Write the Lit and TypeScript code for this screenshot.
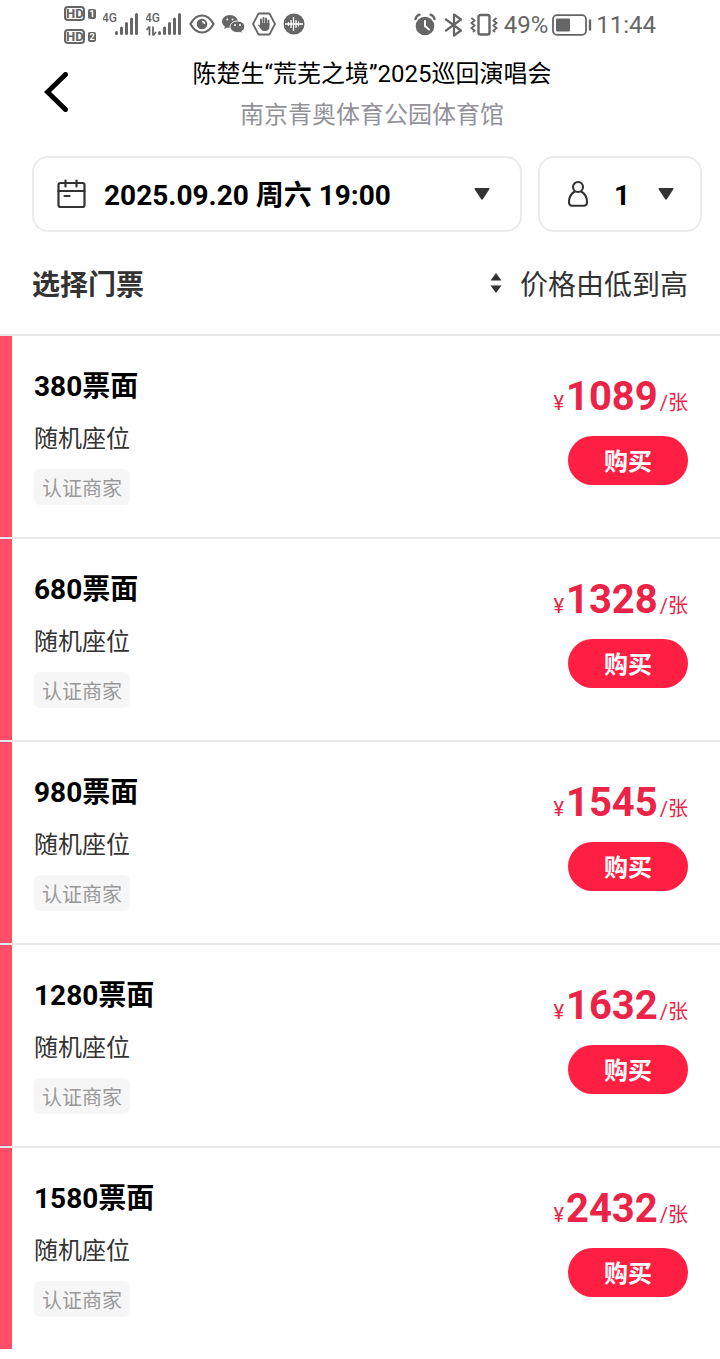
import { LitElement, html, css, svg } from "lit";
import { customElement, property, state } from "lit/decorators.js";

interface Ticket {
  face: number;
  price: number;
}

const TICKETS: Ticket[] = [
  { face: 380, price: 1089 },
  { face: 680, price: 1328 },
  { face: 980, price: 1545 },
  { face: 1280, price: 1632 },
  { face: 1580, price: 2432 },
];

@customElement("status-bar")
class StatusBar extends LitElement {
  static styles = css`
    :host {
      display: flex;
      justify-content: space-between;
      align-items: center;
      box-sizing: border-box;
      height: 48px;
      padding: 0 64px;
      color: #666;
      font-size: 24px;
      line-height: 28px;
    }
    .group {
      display: flex;
      align-items: center;
    }
    .left {
      gap: 7px;
    }
    .right {
      gap: 4px;
      padding-top: 2px;
    }
    svg {
      display: block;
      flex: none;
    }
    .hd {
      display: grid;
      gap: 8px;
      padding-top: 2px;
    }
    .hd-row {
      display: flex;
      align-items: center;
      gap: 3px;
    }
    .hd-tag {
      box-sizing: border-box;
      width: 21px;
      height: 15px;
      border: 2px solid #666;
      border-radius: 4px;
      font-size: 13px;
      font-weight: 800;
      line-height: 12px;
      text-align: center;
    }
    .hd-num {
      width: 8px;
      height: 10px;
      border-radius: 2px;
      background: #666;
      color: #fff;
      font-size: 9px;
      font-weight: 700;
      line-height: 10px;
      text-align: center;
    }
    .net {
      font: 500 12px "Roboto", sans-serif;
    }
  `;

  private bars(x: number) {
    return [0, 1, 2, 3, 4].map(
      (i) => svg`<rect x=${x + i * 5} y=${25 - i * 4.5} width="3" height=${4 + i * 4.5} rx="1.5" />`
    );
  }

  render() {
    return html`
      <div class="group left">
        <div class="hd">
          <div class="hd-row"><span class="hd-tag">HD</span><span class="hd-num">1</span></div>
          <div class="hd-row"><span class="hd-tag">HD</span><span class="hd-num">2</span></div>
        </div>
        <svg width="36" height="36" viewBox="0 0 36 36" fill="#666">
          <text class="net" x="-1" y="16">4G</text>
          ${this.bars(12)}
        </svg>
        <svg width="36" height="36" viewBox="0 0 36 36" fill="#666">
          <text class="net" x="-1" y="16">4G</text>
          <path d="M3.500 20.500v9M3.500 20.500l-3 3.500M7 29.500v-9M7 29.500l3-3.500" fill="none" stroke="#666" stroke-width="1.800" />
          ${this.bars(12)}
        </svg>
        <svg width="26" height="20" viewBox="0 0 26 20">
          <path d="M1.500 10Q6 1.500 13 1.500T24.500 10Q20 18.500 13 18.500T1.500 10Z" fill="none" stroke="#666" stroke-width="2.200" />
          <circle cx="13" cy="10" r="5.300" fill="#666" />
          <path d="M13 7.500a2.500 2.500 0 0 1 2.500 2.500" fill="none" stroke="#fff" stroke-width="1.400" />
        </svg>
        <svg width="23" height="20" viewBox="0 0 23 20">
          <path d="M8 1C3.600 1 0 3.900 0 7.500c0 2 1.100 3.800 2.900 5L2.200 15l2.900-1.500c.9.300 1.900.4 2.900.4 4.400 0 8-2.900 8-6.400S12.400 1 8 1Z" fill="#666" />
          <path d="M15.500 7C11.400 7 8 9.600 8 12.800s3.400 5.800 7.500 5.800c.8 0 1.600-.1 2.300-.3l2.600 1.300-.6-2.200c1.800-1.100 3-2.700 3-4.600C22.800 9.600 19.600 7 15.500 7Z" fill="#666" stroke="#fff" />
          <g fill="#fff"><circle cx="5.300" cy="5.500" r="1" /><circle cx="10.500" cy="5.500" r="1" /><circle cx="13" cy="11" r="1" /><circle cx="18" cy="11" r="1" /></g>
        </svg>
        <svg width="24" height="24" viewBox="0 0 24 24">
          <path d="M6.500 1.500h11L23 12l-5.500 10.500h-11L1 12Z" fill="none" stroke="#666" stroke-width="1.800" stroke-linejoin="round" />
          <path d="M9 13V7.500M11.500 12V6M14 12V6.500M16.400 13V8.500" stroke="#666" stroke-width="1.900" stroke-linecap="round" />
          <path d="M8 11h9.400v4c0 2.500-1.500 4-4.400 4-2.300 0-3.300-1-4.500-2.600L6 13.200c.3-1 1.200-.8 2 .2Z" fill="#666" />
        </svg>
        <svg width="22" height="22" viewBox="0 0 22 22">
          <circle cx="11" cy="11" r="10.500" fill="#666" />
          <path d="M2 11h18M5.500 9v4M8 7v8M10.500 4v14M13 7v8M15.500 8.500v5M18 10v2" stroke="#fff" stroke-width="1.300" />
        </svg>
      </div>
      <div class="group right">
        <svg width="26" height="24" viewBox="0 0 26 24">
          <circle cx="11" cy="13" r="9.300" fill="#666" />
          <path d="M1.500 6Q2.300 2.800 5.500 1.700M20.500 6Q19.700 2.800 16.500 1.700" fill="none" stroke="#666" stroke-width="2.400" stroke-linecap="round" />
          <path d="M11 8v5l4 3.500" fill="none" stroke="#fff" stroke-width="2" stroke-linecap="round" />
        </svg>
        <svg width="22" height="24" viewBox="0 0 22 24">
          <path d="M2 6.500 17 17.500 10 22.500V1.500L17 6.500 2 17.500" fill="none" stroke="#666" stroke-width="2.200" stroke-linejoin="round" stroke-linecap="round" />
        </svg>
        <svg width="30" height="24" viewBox="0 0 30 24" fill="none" stroke="#666">
          <rect x="8.500" y="2" width="11" height="19.500" rx="2" stroke-width="2.400" />
          <path d="M1.500 5l3 2.500-3 2.500 3 2.500-3 2.500 3 2.500-1.500 1.500M26.500 5l-3 2.500 3 2.500-3 2.500 3 2.500-3 2.500 1.500 1.500" stroke-width="1.900" />
        </svg>
        <span>49%</span>
        <svg width="40" height="22" viewBox="0 0 40 22">
          <rect x="1" y="1.200" width="33" height="19.600" rx="4" fill="none" stroke="#666" stroke-width="1.800" />
          <rect x="4" y="4.500" width="14" height="13" rx="1" fill="#666" />
          <path d="M38 6.500v9" stroke="#666" stroke-width="2.400" stroke-linecap="round" />
        </svg>
        <span>11:44</span>
      </div>
    `;
  }
}

@customElement("ticket-row")
class TicketRow extends LitElement {
  @property({ type: Number }) face = 0;
  @property({ type: Number }) price = 0;

  static styles = css`
    :host {
      display: flex;
      justify-content: space-between;
      align-items: flex-start;
      border-left: 12px solid #ff4d6a;
      padding: 35px 32px 32px 22px;
    }
    .info {
      display: flex;
      flex-direction: column;
      align-items: flex-start;
    }
    .name {
      margin: 0;
      font-size: 28px;
      font-weight: 700;
      line-height: 32px;
      color: #000;
    }
    .seat {
      margin: 20px 0 14px;
      font-size: 24px;
      line-height: 32px;
      color: #333;
    }
    .badge {
      padding: 4px 8px 0;
      border-radius: 6px;
      background: #f6f6f6;
      color: #999;
      font-size: 20px;
      line-height: 32px;
    }
    .offer {
      display: flex;
      flex-direction: column;
      align-items: flex-end;
      gap: 13px;
      padding-top: 6px;
    }
    .price {
      display: flex;
      align-items: baseline;
      gap: 2px;
      color: #eb2447;
      font-size: 20px;
      line-height: 40px;
    }
    .amount {
      font-size: 40px;
      font-weight: 700;
    }
    .buy {
      width: 120px;
      height: 49px;
      padding: 2px 0 0;
      border: 0;
      border-radius: 25px;
      background: #ff1f43;
      color: #fff;
      font: inherit;
      font-size: 24px;
      font-weight: 700;
      line-height: 46px;
      cursor: pointer;
    }
  `;

  render() {
    return html`
      <div class="info">
        <h3 class="name">${this.face}票面</h3>
        <p class="seat">随机座位</p>
        <span class="badge">认证商家</span>
      </div>
      <div class="offer">
        <div class="price"><span>¥</span><span class="amount">${this.price}</span><span>/张</span></div>
        <button class="buy" type="button">购买</button>
      </div>
    `;
  }
}

@customElement("app-root")
class AppRoot extends LitElement {
  @state() private ascending = true;

  static styles = css`
    :host {
      display: block;
      min-height: 100vh;
      background: #fff;
      color: #333;
      font-family: "Roboto", "Noto Sans CJK SC", sans-serif;
    }
    svg {
      display: block;
      flex: none;
    }
    .header {
      display: grid;
      grid-template-columns: 76px 1fr 52px;
      align-items: start;
      padding-top: 10px;
      text-align: center;
    }
    .back {
      justify-self: end;
      margin: 0;
      padding: 14px 8px;
      border: 0;
      background: none;
      cursor: pointer;
    }
    .title,
    .venue {
      margin: 0;
      font-size: 24px;
      font-weight: 400;
      line-height: 32px;
    }
    .title {
      color: #000;
    }
    .venue {
      margin-top: 9px;
      color: #929299;
    }
    .filters {
      display: grid;
      grid-template-columns: 1fr 164px;
      gap: 16px;
      padding: 25px 18px 0 32px;
    }
    .field {
      display: flex;
      align-items: center;
      box-sizing: border-box;
      height: 76px;
      border: 2px solid #ebebeb;
      border-radius: 16px;
      padding: 0 30px 0 22px;
      gap: 18px;
    }
    .count {
      padding: 0 26px;
      gap: 24px;
    }
    .select {
      flex: 1;
      min-width: 0;
      padding: 4px 0 0;
      border: 0;
      appearance: none;
      background: none;
      color: #000;
      font: inherit;
      font-size: 28px;
      font-weight: 700;
      line-height: 40px;
    }
    .bar {
      display: flex;
      justify-content: space-between;
      align-items: center;
      height: 102px;
      padding: 0 32px;
      border-bottom: 2px solid #e8e8e8;
    }
    .heading {
      margin: 0;
      padding-top: 6px;
      font-size: 28px;
      font-weight: 700;
      line-height: 40px;
    }
    .sort {
      display: flex;
      align-items: center;
      gap: 18px;
      padding: 0;
      border: 0;
      background: none;
      color: #333;
      font: inherit;
      font-size: 28px;
      line-height: 40px;
      cursor: pointer;
    }
    .sort-label {
      padding-top: 6px;
    }
    .list {
      margin: 0;
      padding: 0;
      list-style: none;
    }
    .item + .item {
      border-top: 2px solid #e8e8e8;
    }
  `;

  private caret() {
    return html`<svg width="16" height="12" viewBox="0 0 16 12" fill="#333">
      <path d="M1.500 0h13q1.600.2.700 1.600L9 11q-1 1.400-2 0L.8 1.600Q-.1.200 1.500 0Z" />
    </svg>`;
  }

  render() {
    const tickets = this.ascending ? TICKETS : [...TICKETS].reverse();
    return html`
      <status-bar></status-bar>
      <header class="header">
        <button class="back" type="button" aria-label="返回">
          <svg width="24" height="40" viewBox="0 0 24 40" fill="none" stroke="#000" stroke-width="5" stroke-linecap="round" stroke-linejoin="miter">
            <path d="M21.500 2.500 3.500 20l18 17.500" />
          </svg>
        </button>
        <div>
          <h1 class="title">陈楚生“荒芜之境”2025巡回演唱会</h1>
          <p class="venue">南京青奥体育公园体育馆</p>
        </div>
      </header>
      <section class="filters">
        <label class="field">
          <svg width="30" height="30" viewBox="0 0 30 30" fill="none" stroke="#333" stroke-width="2.200" stroke-linecap="round" stroke-linejoin="round">
            <rect x="2.500" y="4" width="26" height="24" rx="2" />
            <path d="M2.500 12h26M9.500 1.500v6M20.500 1.500v6M8.500 17h5" />
          </svg>
          <select class="select" aria-label="场次">
            <option>2025.09.20 周六 19:00</option>
          </select>
          ${this.caret()}
        </label>
        <label class="field count">
          <svg width="24" height="28" viewBox="0 0 24 28" fill="none" stroke="#333" stroke-width="2.100">
            <circle cx="12" cy="7" r="5" />
            <path d="M9 11.500C5 13.500 3.200 17.500 3 21.500c-.2 2.700 1 4.300 3.300 4.300h11.400c2.300 0 3.500-1.600 3.300-4.300-.2-4-2-8-6-10" />
          </svg>
          <select class="select" aria-label="数量">
            <option>1</option>
            <option>2</option>
            <option>3</option>
            <option>4</option>
          </select>
          ${this.caret()}
        </label>
      </section>
      <div class="bar">
        <h2 class="heading">选择门票</h2>
        <button class="sort" type="button" @click=${() => (this.ascending = !this.ascending)}>
          <svg width="12" height="22" viewBox="0 0 12 22" fill="#333">
            <path d="M6 1 11.500 8.500H.5ZM6 21 .5 13.500h11Z" />
          </svg>
          <span class="sort-label">${this.ascending ? "价格由低到高" : "价格由高到低"}</span>
        </button>
      </div>
      <ul class="list">
        ${tickets.map(
          (t) => html`<li class="item"><ticket-row .face=${t.face} .price=${t.price}></ticket-row></li>`
        )}
      </ul>
    `;
  }
}
